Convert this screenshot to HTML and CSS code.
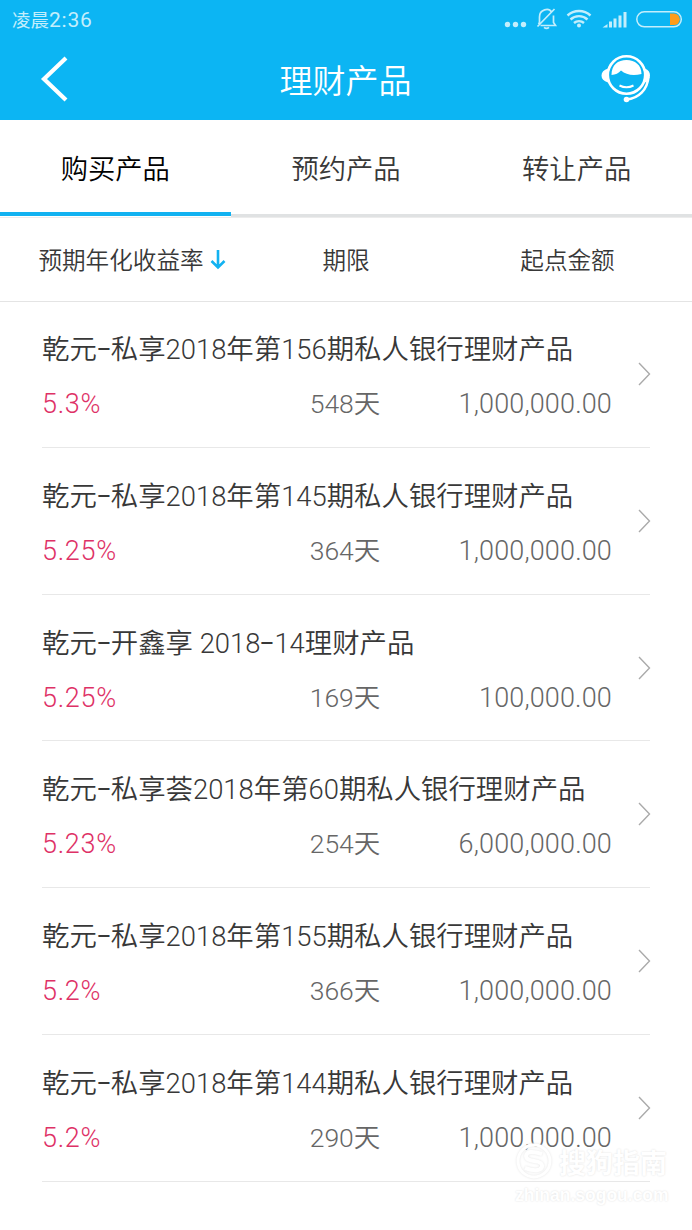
FILE: index.html
```
<!DOCTYPE html>
<html lang="zh-CN">
<head>
    <meta charset="UTF-8">
    <meta name="viewport" content="width=device-width, initial-scale=1.0">
    <title>理财产品</title>
    <link rel="stylesheet" href="styles.css">
</head>
<body>
    <header>
        <div class="status-bar">
            <span class="time">凌晨<b>2:36</b></span>
            <svg class="status-icons" width="180" height="24" viewBox="0 0 180 24" fill="none" stroke="#c3eefc">
                <g fill="#c3eefc" stroke="none">
                    <circle cx="3.5" cy="16.500" r="2.7"/>
                    <circle cx="11.5" cy="16.500" r="2.7"/>
                    <circle cx="19.5" cy="16.500" r="2.7"/>
                </g>
                <path d="M35.500 14.500V9C35.500 1 45 -0.500 47.500 4M49.500 7.500V14.500L51.500 17.500H36.500M35.500 14.500L34.500 16M40 19.300q2.500 2 5 0M33.500 18.500L50.500 1" stroke-width="1.7"/>
                <path d="M63.500 7.500a17 17 0 0 1 23 0M66.500 11.500a12.500 12.500 0 0 1 17 0M70 15a7.500 7.500 0 0 1 10 0" stroke-width="2.400"/>
                <circle cx="75" cy="17.500" r="2" fill="#c3eefc" stroke="none"/>
                <path d="M98.500 19.500h5v-3.500zM105 19.500v-6h3v6zM109.500 19.500v-9h3v9zM114.500 19.500v-12h3v12zM119.500 19.500v-15.500h3v15.500z" fill="#c3eefc" stroke="none"/>
                <rect x="132.800" y="3.800" width="44.500" height="15" rx="7.500" stroke-width="1.500"/>
                <path d="M166 5.500h4a5.800 5.800 0 0 1 0 11.600h-4z" fill="#ff9c1a" stroke="none"/>
            </svg>
        </div>
        <div class="title-bar">
            <svg width="30" height="48" viewBox="0 0 30 48" fill="none" stroke="#fff" stroke-width="4.200">
                <path d="M26 3L4 24L26 45"/>
            </svg>
            <h1>理财产品</h1>
            <svg width="50" height="48" viewBox="0 0 50 48" fill="none" stroke="#fff">
                <circle cx="25.500" cy="20" r="18.700" stroke-width="2.600"/>
                <path d="M10.500 20C10.500 10 17 5 25.500 5S40.500 10 40.500 19Q27.500 22 20 15.500Q16.500 19.500 10.500 20z" fill="#fff" stroke="none"/>
                <path d="M7 13.500Q0.500 15.500 0.500 20.500Q0.500 25.500 7 27.500zM44 13.500Q49 15.500 49 20.500Q48 26.500 44 27.500z" fill="#fff" stroke="none"/>
                <path d="M18.500 30.500q7 3.500 14 0" stroke-width="2"/>
                <path d="M47.500 21.500C46.500 35 37.500 43.500 25.500 44.500" stroke-width="2.600"/>
                <circle cx="25.500" cy="44.500" r="2.800" fill="#fff" stroke="none"/>
            </svg>
        </div>
    </header>

    <nav class="tabs">
        <div class="tab active">购买产品</div>
        <div class="tab">预约产品</div>
        <div class="tab">转让产品</div>
    </nav>

    <div class="sort-bar">
        <div class="sort">预期年化收益率<svg width="16" height="20" viewBox="0 0 16 20" fill="none" stroke="#12b2f1" stroke-width="2.600"><path d="M8 0V17M1.500 11L8 17.500L14.500 11"/></svg></div>
        <div class="sort">期限</div>
        <div class="sort">起点金额</div>
    </div>

    <main>
        <div class="product">
            <h2>乾元<i>-</i>私享2018年第156期私人银行理财产品</h2>
            <div class="info"><span class="rate">5.3%</span><span class="term">548天</span><span class="amount">1,000,000.00</span></div>
            <svg class="arrow" width="14" height="26" viewBox="0 0 14 26"><path d="M2 2L12.500 13L2 24"/></svg>
        </div>
        <div class="product">
            <h2>乾元<i>-</i>私享2018年第145期私人银行理财产品</h2>
            <div class="info"><span class="rate">5.25%</span><span class="term">364天</span><span class="amount">1,000,000.00</span></div>
            <svg class="arrow" width="14" height="26" viewBox="0 0 14 26"><path d="M2 2L12.500 13L2 24"/></svg>
        </div>
        <div class="product">
            <h2>乾元<i>-</i>开鑫享 2018<i>-</i>14理财产品</h2>
            <div class="info"><span class="rate">5.25%</span><span class="term">169天</span><span class="amount">100,000.00</span></div>
            <svg class="arrow" width="14" height="26" viewBox="0 0 14 26"><path d="M2 2L12.500 13L2 24"/></svg>
        </div>
        <div class="product">
            <h2>乾元<i>-</i>私享荟2018年第60期私人银行理财产品</h2>
            <div class="info"><span class="rate">5.23%</span><span class="term">254天</span><span class="amount">6,000,000.00</span></div>
            <svg class="arrow" width="14" height="26" viewBox="0 0 14 26"><path d="M2 2L12.500 13L2 24"/></svg>
        </div>
        <div class="product">
            <h2>乾元<i>-</i>私享2018年第155期私人银行理财产品</h2>
            <div class="info"><span class="rate">5.2%</span><span class="term">366天</span><span class="amount">1,000,000.00</span></div>
            <svg class="arrow" width="14" height="26" viewBox="0 0 14 26"><path d="M2 2L12.500 13L2 24"/></svg>
        </div>
        <div class="product">
            <h2>乾元<i>-</i>私享2018年第144期私人银行理财产品</h2>
            <div class="info"><span class="rate">5.2%</span><span class="term">290天</span><span class="amount">1,000,000.00</span></div>
            <svg class="arrow" width="14" height="26" viewBox="0 0 14 26"><path d="M2 2L12.500 13L2 24"/></svg>
        </div>
    </main>

    <div class="watermark">
        <div class="brand">
            <svg width="38" height="38" viewBox="0 0 38 38" fill="none" stroke="#fff">
                <circle cx="19" cy="19" r="16" stroke-width="3"/>
                <path d="M27 12Q12 7 11 14Q11 18 19 19Q28 20 27 25Q24 31 10 26" stroke-width="4"/>
            </svg>
            <span>搜狗指南</span>
        </div>
        <div class="site">zhinan.sogou.com</div>
    </div>
</body>
</html>
```
FILE: styles.css
```
* {
    box-sizing: border-box;
}
body {
    margin: 0;
    height: 1230px;
    overflow: hidden;
    position: relative;
    background-color: #fff;
    color: #383838;
    font-family: Roboto, "Noto Sans CJK SC", sans-serif;
    font-weight: 350;
}
svg {
    display: block;
    flex: none;
}
h1, h2 {
    margin: 0;
    font-weight: 350;
}
header {
    height: 120px;
    background-color: #0cb5f3;
    color: #fff;
}
.status-bar {
    display: flex;
    justify-content: space-between;
    height: 40px;
    padding: 8px 8px 0 12px;
}
.time {
    font-size: 18.5px;
    line-height: 25px;
    color: #c3eefc;
    font-weight: 400;
}
.time b {
    font-size: 21px;
    font-weight: 400;
    letter-spacing: 0.8px;
}
.title-bar {
    display: flex;
    align-items: center;
    justify-content: space-between;
    height: 78px;
    padding: 0 41px 0 40px;
}
.title-bar h1 {
    font-size: 33px;
    line-height: 48px;
    padding: 5px 0 0 20px;
}
.tabs {
    display: grid;
    grid-template-columns: repeat(3, 1fr);
    height: 98px;
    border-bottom: 1px solid #ececec;
}
.tab {
    height: 97px;
    padding-top: 3px;
    font-size: 27.3px;
    line-height: 91px;
    text-align: center;
    border-bottom: 3px solid #e0e2e3;
}
.tab:not(.active) {
    padding-top: 5px;
}
.tab.active {
    height: 96px;
    padding-top: 5px;
    color: #000;
    border-bottom: 4px solid #12b2f1;
}
.sort-bar {
    display: grid;
    grid-template-columns: 264px 164px 1fr;
    height: 84px;
    border-bottom: 1px solid #e4e4e4;
    font-size: 23.6px;
    line-height: 79px;
}
.sort {
    display: flex;
    align-items: center;
    justify-content: center;
    padding-top: 4px;
}
.sort svg {
    margin: -4px 0 0 6px;
}
.sort:last-child {
    padding-left: 15px;
}
main {
    margin-top: -1px;
}
.product {
    position: relative;
    height: 146.75px;
    margin: 0 42px;
    padding-top: 29px;
    border-bottom: 1px solid #e8e8e8;
}
.product h2 {
    font-size: 27.4px;
    line-height: 40px;
    white-space: nowrap;
}
.product h2 i {
    display: inline-block;
    width: 14px;
    font-style: normal;
    font-weight: 400;
    text-align: center;
    transform: translateY(-2px) scaleX(1.7);
}
.info {
    display: grid;
    grid-template-columns: 220px 166px 184px;
    margin-top: 14px;
    font-size: 27px;
    line-height: 40px;
    color: #666;
}
.rate {
    color: #de3166;
    letter-spacing: 0.7px;
}
.term {
    text-align: center;
    font-size: 26.5px;
}
.amount {
    text-align: right;
    letter-spacing: 0.15px;
}
.arrow {
    position: absolute;
    right: -1px;
    top: 60px;
    fill: none;
    stroke: #aaa;
    stroke-width: 1.4;
}
.watermark {
    position: absolute;
    left: 515px;
    top: 1142px;
    color: #fff;
    font-weight: 700;
    text-shadow: 0 0 2px #ddd;
}
.brand {
    display: flex;
    align-items: center;
    gap: 6px;
    height: 38px;
    font-size: 27px;
}
.brand svg {
    filter: drop-shadow(0 0 1px #e4e4e4);
}
.site {
    font-family: "Liberation Sans", sans-serif;
    font-size: 17.5px;
    line-height: 30px;
}
```
